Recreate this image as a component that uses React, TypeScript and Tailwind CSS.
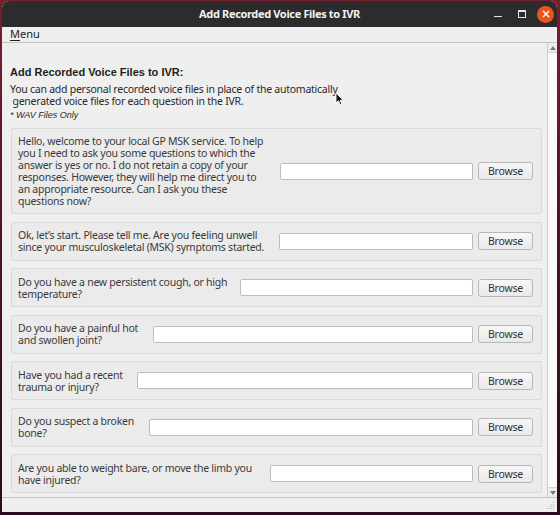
import React from 'react'

type Question = {
  lines: string[]
  labelW: string
  tall?: boolean
}

const questions: Question[] = [
  {
    lines: [
      'Hello, welcome to your local GP MSK service. To help',
      'you I need to ask you some questions to which the',
      'answer is yes or no. I do not retain a copy of your',
      'responses. However, they will help me direct you to',
      'an appropriate resource. Can I ask you these',
      'questions now?',
    ],
    labelW: 'w-[254px]',
    tall: true,
  },
  {
    lines: ['Ok, let\u2019s start. Please tell me. Are you feeling unwell', 'since your musculoskeletal (MSK) symptoms started.'],
    labelW: 'w-[253px]',
  },
  { lines: ['Do you have a new persistent cough, or high', 'temperature?'], labelW: 'w-[214px]' },
  { lines: ['Do you have a painful hot', 'and swollen joint?'], labelW: 'w-[127px]' },
  { lines: ['Have you had a recent', 'trauma or injury?'], labelW: 'w-[111px]' },
  { lines: ['Do you suspect a broken', 'bone?'], labelW: 'w-[123px]' },
  { lines: ['Are you able to weight bare, or move the limb you', 'have injured?'], labelW: 'w-[244px]' },
]

function QuestionRow({ q }: { q: Question }) {
  return (
    <div
      className={`${q.tall ? 'h-[86px]' : 'h-[39px]'} flex items-center gap-2 border border-[#d9d9d9] bg-[#ebebeb] pl-[6px] pr-[8px] rounded-[2px]`}
    >
      <div className={`${q.labelW} shrink-0 text-[10.5px] leading-[12px] tracking-[-0.25px] text-[#3a3a3a]`}>
        {q.lines.map((l, i) => (
          <div key={i} className="whitespace-nowrap">
            {l}
          </div>
        ))}
      </div>
      <div className="flex-1 h-[17px] bg-white border border-[#bcbcbc] rounded-[2px]" />
      <button className="ml-[-3px] w-[55px] h-[18px] shrink-0 border border-[#b7b7b7] rounded-[3px] bg-gradient-to-b from-[#f7f7f7] to-[#e9e9e9] text-[10.5px] leading-[16px] tracking-[-0.2px] text-[#333]">
        Browse
      </button>
    </div>
  )
}

export default function App() {
  return (
    <div className="relative w-[560px] h-[515px] overflow-hidden bg-gradient-to-b from-[#7b1e2d] via-[#4a1128] to-[#2b0a20] font-['Noto_Sans',sans-serif]">
      <div className="ml-[2px] mt-[1px] w-[555px] h-[511px] flex flex-col rounded-t-[7px] overflow-hidden bg-[#efefef]">
        {/* Title bar */}
        <div className="relative h-[26px] shrink-0 bg-[#2c2c2c] flex items-center justify-center">
          <span className="text-[11px] font-bold text-[#f2f2f2] tracking-[-0.35px]">Add Recorded Voice Files to IVR</span>
          <div className="absolute right-[3px] top-0 h-[26px] flex items-center">
            <div className="w-[8px] h-[1.5px] bg-[#e6e6e6] mt-[5px]" />
            <div className="ml-[16px] w-[8px] h-[8px] border border-[#e6e6e6] border-t-2" />
            <div className="ml-[11px] w-[17px] h-[17px] rounded-full bg-[#e9541f] flex items-center justify-center">
              <svg width="8" height="8" viewBox="0 0 8 8">
                <path d="M1 1L7 7M7 1L1 7" stroke="#fff" strokeWidth="1.4" />
              </svg>
            </div>
          </div>
        </div>

        {/* Menu bar */}
        <div className="h-[16px] shrink-0 flex items-center pl-[8px] border-b border-[#c4c4c4] text-[11px] text-[#222]">
          <span>
            <span className="underline underline-offset-2">M</span>enu
          </span>
        </div>

        {/* Scroll area */}
        <div className="flex-1 min-h-0 flex border-b border-[#c4c4c4]">
          <div className="flex-1 overflow-hidden pt-[22px] pl-[8px] pr-[5px]">
            <h1 className="font-['Liberation_Sans',sans-serif] font-bold text-[11px] leading-[14px] text-[#1e1e1e]">
              Add Recorded Voice Files to IVR:
            </h1>
            <p className="mt-[4px] text-[10.5px] leading-[12px] tracking-[-0.25px] text-[#2a2a2a] whitespace-pre">
              {'You can add personal recorded voice files in place of the automatically\n generated voice files for each question in the IVR.'}
            </p>
            <p className="mt-[3px] font-['Liberation_Sans',sans-serif] italic text-[9px] leading-[11px] text-[#2a2a2a]">
              * WAV Files Only
            </p>
            <div className="mt-[7px] ml-[1px] flex flex-col gap-[7.5px]">
              {questions.map((q, i) => (
                <QuestionRow key={i} q={q} />
              ))}
            </div>
          </div>

          {/* Scrollbar */}
          <div className="w-[10px] shrink-0 flex flex-col border-l border-[#cdcdcd] bg-[#ececec]">
            <div className="h-[9px] flex items-center justify-center">
              <svg width="6" height="4" viewBox="0 0 6 4">
                <path d="M0 4L3 0L6 4Z" fill="#7a7a7a" />
              </svg>
            </div>
            <div className="flex-1 bg-[#fafafa] border-y border-[#d6d6d6]" />
            <div className="h-[9px] flex items-center justify-center">
              <svg width="6" height="4" viewBox="0 0 6 4">
                <path d="M0 0L3 4L6 0Z" fill="#7a7a7a" />
              </svg>
            </div>
          </div>
        </div>

        {/* Status strip */}
        <div className="h-[14px] shrink-0 flex justify-end items-end pr-[2px] pb-[2px]">
          <svg width="8" height="8" viewBox="0 0 8 8">
            <g fill="#bdbdbd">
              <rect x="6" y="0" width="1" height="1" />
              <rect x="4" y="2" width="1" height="1" />
              <rect x="6" y="2" width="1" height="1" />
              <rect x="2" y="4" width="1" height="1" />
              <rect x="4" y="4" width="1" height="1" />
              <rect x="6" y="4" width="1" height="1" />
              <rect x="0" y="6" width="1" height="1" />
              <rect x="2" y="6" width="1" height="1" />
              <rect x="4" y="6" width="1" height="1" />
              <rect x="6" y="6" width="1" height="1" />
            </g>
          </svg>
        </div>
      </div>

      {/* Mouse pointer */}
      <svg className="absolute left-[335px] top-[92px]" width="9" height="14" viewBox="0 0 9 14">
        <path d="M1 1V11L3.5 8.8L5.2 12.8L6.8 12.1L5.2 8.3H8.3Z" fill="#111" stroke="#fff" strokeWidth="0.9" />
      </svg>
    </div>
  )
}
